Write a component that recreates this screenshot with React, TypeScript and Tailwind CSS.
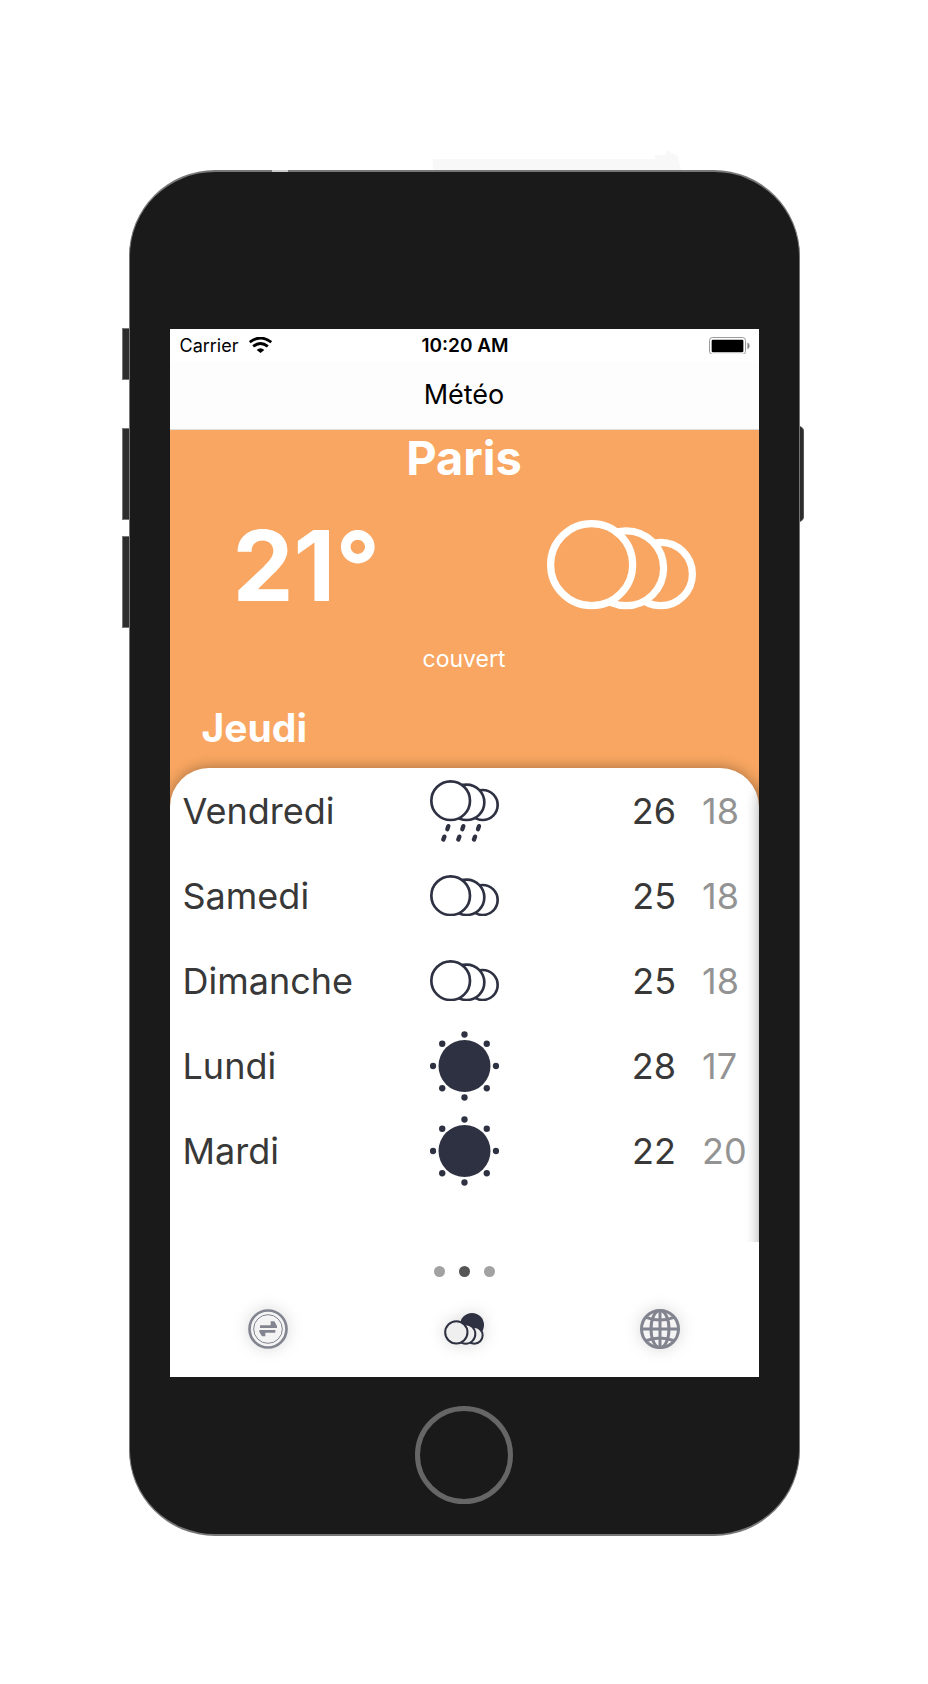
import { useState } from "react";
import type { ReactNode } from "react";

type Weather = "rain" | "cloud" | "sun";

type Forecast = { day: string; weather: Weather; high: number; low: number };

const forecasts: Forecast[] = [
  { day: "Vendredi", weather: "rain", high: 26, low: 18 },
  { day: "Samedi", weather: "cloud", high: 25, low: 18 },
  { day: "Dimanche", weather: "cloud", high: 25, low: 18 },
  { day: "Lundi", weather: "sun", high: 28, low: 17 },
  { day: "Mardi", weather: "sun", high: 22, low: 20 },
];

const SUN_DOTS = [0, 45, 90, 135, 180, 225, 270, 315].map((deg) => {
  const a = (deg * Math.PI) / 180;
  return { cx: 103.5 + 94.5 * Math.cos(a), cy: 105 + 94.5 * Math.sin(a) };
});

const RAIN_X = [53, 98, 145];

/* Three overlapping circles, the largest in front. */
function CloudCircles({ stroke }: { stroke: number }) {
  const h = stroke / 2;
  return (
    <g stroke="currentColor" strokeWidth={stroke}>
      <circle cx="158" cy="75" r={49 - h} />
      <circle cx="110" cy="67" r={57 - h} />
      <circle cx="62" cy="62" r={62 - h} />
    </g>
  );
}

function WeatherIcon({ weather }: { weather: Weather }) {
  if (weather === "sun") {
    return (
      <svg viewBox="0 0 207 210" className="mx-auto block w-[69px] fill-[#2e3142]" role="img" aria-label="Ensoleillé">
        <circle cx="103.5" cy="105" r="78" />
        {SUN_DOTS.map((d, i) => (
          <circle key={i} cx={d.cx} cy={d.cy} r="9.5" />
        ))}
      </svg>
    );
  }
  if (weather === "rain") {
    return (
      <svg viewBox="0 0 207 186" className="mx-auto block w-[69px] fill-white text-[#2e3142]" role="img" aria-label="Pluie">
        <CloudCircles stroke={8} />
        <g stroke="currentColor" strokeWidth="13" strokeLinecap="round">
          {RAIN_X.map((x) => (
            <g key={x}>
              <path d={`M${x + 2} 138.500L${x - 1} 147.500`} />
              <path d={`M${x - 10} 170L${x - 13} 178.500`} />
            </g>
          ))}
        </g>
      </svg>
    );
  }
  return (
    <svg viewBox="0 0 207 124" className="mx-auto block w-[69px] fill-white text-[#2e3142]" role="img" aria-label="Couvert">
      <CloudCircles stroke={8} />
    </svg>
  );
}

function ExchangeIcon() {
  return (
    <svg viewBox="0 0 120 120" className="size-10 fill-none text-[#82848f]" aria-hidden="true">
      <circle cx="60" cy="60" r="59" fill="#f4f4f4" />
      <circle cx="60" cy="60" r="55.500" stroke="currentColor" strokeWidth="8" />
      <circle cx="60" cy="60" r="43" stroke="currentColor" strokeWidth="3" />
      <path fill="currentColor" d="M36 49H68V37H79L87 51V57H36Z" />
      <path fill="currentColor" d="M82 71H52V82H42L34 69V63H82Z" />
    </svg>
  );
}

function CloudSunIcon() {
  return (
    <svg viewBox="0 0 120 96" className="w-10 text-[#2e3142]" aria-hidden="true">
      <circle cx="84" cy="36" r="36" fill="currentColor" />
      <g fill="#efefef" stroke="currentColor" strokeWidth="6">
        <circle cx="91" cy="67" r="25" />
        <circle cx="65" cy="63" r="29" />
        <circle cx="37" cy="58" r="33.500" />
      </g>
    </svg>
  );
}

function GlobeIcon() {
  return (
    <svg viewBox="0 0 120 120" className="size-10 fill-none text-[#82848f]" aria-hidden="true">
      <circle cx="60" cy="60" r="56" fill="#f4f4f4" />
      <g stroke="currentColor" strokeWidth="9">
        <circle cx="60" cy="60" r="55.500" />
        <ellipse cx="60" cy="60" rx="27" ry="55.500" />
        <path d="M60 4V116M4 60H116M18 25Q60 41 102 25M18 95Q60 79 102 95" />
      </g>
    </svg>
  );
}

function WifiIcon() {
  return (
    <svg viewBox="0 0 66 46" className="w-[23px] fill-none stroke-black" aria-hidden="true">
      <path d="M2 15Q33 -9 64 15" strokeWidth="8" />
      <path d="M12 27Q33 10 54 27" strokeWidth="8" />
      <path d="M22 37Q33 28 44 37L33 46Z" fill="black" stroke="none" />
    </svg>
  );
}

function BatteryIcon() {
  return (
    <svg viewBox="0 0 124 54" className="w-[41px]" role="img" aria-label="Batterie pleine">
      <rect x="1.500" y="1.500" width="109" height="51" rx="9" fill="none" stroke="#999" strokeWidth="3" />
      <rect x="8" y="8" width="96" height="38" rx="4" />
      <path d="M116 17Q123 20 123 27T116 37Z" fill="#888" />
    </svg>
  );
}

const tabs: { name: string; icon: ReactNode }[] = [
  { name: "Change", icon: <ExchangeIcon /> },
  { name: "Météo", icon: <CloudSunIcon /> },
  { name: "Traduction", icon: <GlobeIcon /> },
];

function Screen() {
  const [page, setPage] = useState(1);

  return (
    <div className="flex flex-col overflow-hidden bg-white">
      <div className="grid h-8 grid-cols-3 items-center pt-px pr-2 pl-2.5 text-[18px] leading-6 text-black">
        <div className="flex items-center gap-2.5">
          <span>Carrier</span>
          <WifiIcon />
        </div>
        <span className="text-center text-[19px] font-semibold">10:20 AM</span>
        <div className="flex justify-end">
          <BatteryIcon />
        </div>
      </div>
      <header className="flex h-[69px] items-center justify-center border-b border-[#e0dcd8] bg-[#fdfdfd]">
        <h1 className="text-[27px] leading-8 text-black">Météo</h1>
      </header>

      <main className="overflow-hidden bg-[#f8a661] text-white">
        <h2 className="text-center text-[47px] leading-[56px] font-bold">Paris</h2>
        <div className="flex h-[158px] items-center justify-between px-[63px]">
          <p className="text-[97px] leading-none font-bold">21°</p>
          <svg viewBox="0 0 207 124" className="w-[149px] fill-[#f8a661]" role="img" aria-label="Couvert">
            <CloudCircles stroke={10} />
          </svg>
        </div>
        <p className="text-center text-[23px] leading-[30px]">couvert</p>
        <h3 className="mt-[30px] mb-4 pl-8 text-[39px] leading-[48px] font-bold">Jeudi</h3>

        <div className="relative">
          <section className="rounded-t-[39px] bg-white pb-[49px] shadow-[0_0_14px_rgba(0,0,0,0.35)]">
            <table className="w-full table-fixed text-left text-[36px] leading-[44px] text-[#383838]" aria-label="Prévisions">
              <colgroup>
                <col className="w-[40%]" />
                <col className="w-[20%]" />
                <col className="w-[26%]" />
                <col className="w-[14%]" />
              </colgroup>
              <tbody>
                {forecasts.map((f) => (
                  <tr key={f.day} className="h-[85px]">
                    <th scope="row" className="pl-[13px] font-normal">
                      {f.day}
                    </th>
                    <td className="pl-0.5">
                      <WeatherIcon weather={f.weather} />
                    </td>
                    <td className="text-right">{f.high}</td>
                    <td className="pl-[26px] text-[#939393]">{f.low}</td>
                  </tr>
                ))}
              </tbody>
            </table>
          </section>
          {/* Edge of the next page's sheet, which casts its shadow on this one */}
          <div className="absolute top-0 -bottom-10 left-full w-10 rounded-tl-[39px] bg-white shadow-[0_0_14px_rgba(0,0,0,0.35)]" />
        </div>
      </main>

      <div className="relative flex h-[58px] items-center justify-center gap-3.5 bg-white">
        {[0, 1, 2].map((i) => (
          <button
            key={i}
            type="button"
            aria-label={`Page ${i + 1}`}
            onClick={() => setPage(i)}
            className={i === page ? "size-[11px] rounded-full bg-[#555]" : "size-[11px] rounded-full bg-[#a2a2a2]"}
          />
        ))}
      </div>
      <nav className="grid grid-cols-3 bg-white pb-[19px]">
        {tabs.map((t) => (
          <button
            key={t.name}
            type="button"
            aria-label={t.name}
            className="flex h-[58px] items-center justify-center drop-shadow-[0_0_8px_rgba(0,0,0,0.15)]"
          >
            {t.icon}
          </button>
        ))}
      </nav>
    </div>
  );
}

export default function App() {
  return (
    <div className="min-h-screen bg-white px-6 pt-[170px] pb-[148px] font-[Inter,'Liberation_Sans',sans-serif]">
      <div className="relative mx-auto max-w-[671px]">
        <svg viewBox="0 0 248 20" className="absolute -top-[20px] left-[304px] w-[248px] fill-[#f8f8f8]" aria-hidden="true">
          <path d="M0 9H222V5H233V0L245 6L248 20H0Z" />
        </svg>
        <div className="absolute top-[158px] -left-[7px] h-[52px] w-2 border border-[#777] bg-[#2d2d2d]" />
        <div className="absolute top-[258px] -left-[7px] h-[92px] w-2 border border-[#777] bg-[#2d2d2d]" />
        <div className="absolute top-[366px] -left-[7px] h-[92px] w-2 border border-[#777] bg-[#2d2d2d]" />
        <div className="absolute top-[256px] -right-[4px] h-24 w-2 rounded-r-[5px] border border-[#555] bg-[#2d2d2d]" />
        <div className="relative rounded-[86px] border border-t-2 border-b-2 border-[#777] bg-[#1a1a1a] px-10 pt-[157px] pb-[30px]">
          <div className="absolute -top-0.5 left-[142px] h-0.5 w-4 bg-[#ccc]" />
          <Screen />
          <button
            type="button"
            aria-label="Accueil"
            className="mx-auto mt-[29px] block size-[98px] rounded-full border-[5px] border-[#666]"
          />
        </div>
      </div>
    </div>
  );
}
